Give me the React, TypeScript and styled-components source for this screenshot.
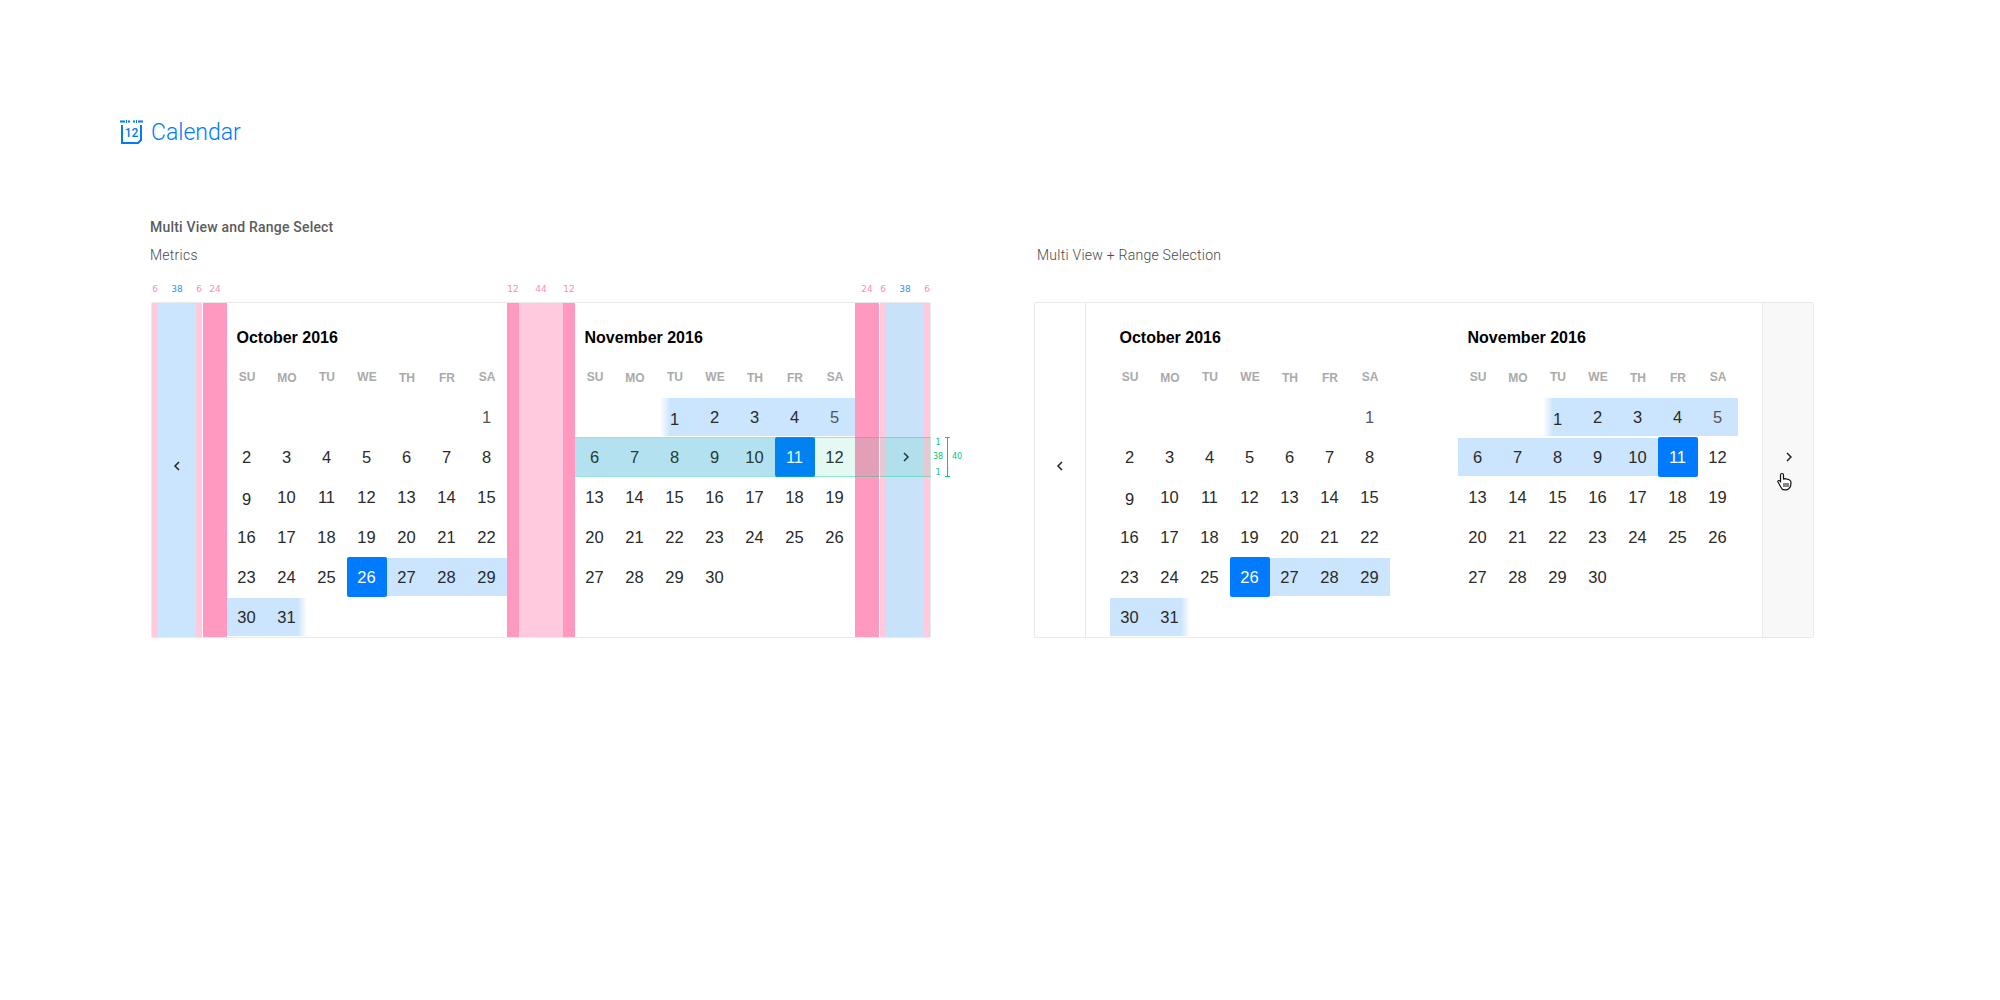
import React from 'react';
import styled, { createGlobalStyle, css } from 'styled-components';

const GlobalStyle = createGlobalStyle`
  html, body {
    margin: 0;
    background: #fff;
  }
`;

const Page = styled.div`
  width: 2000px;
  height: 1000px;
  padding: 118px 0 0 120px;
  box-sizing: border-box;
  font-family: Roboto, 'Liberation Sans', sans-serif;
  overflow: hidden;
`;

const Header = styled.header`
  display: flex;
  align-items: center;
  gap: 8px;
  height: 28px;
  color: #007aff;
`;

const HeaderTitle = styled.h1`
  margin: 2px 0 0;
  font-size: 23px;
  font-weight: 300;
  line-height: 28px;
`;

const Section = styled.section`
  display: grid;
  grid-template-columns: 780px 780px;
  column-gap: 103px;
  margin: 71px 0 0 31px;
`;

const SectionTitle = styled.h2`
  grid-column: 1 / -1;
  margin: 0 0 8px -1px;
  font-size: 14px;
  font-weight: 500;
  line-height: 20px;
  letter-spacing: 0.2px;
  color: #5c5c5c;
`;

const Caption = styled.div<{ $indent?: number }>`
  margin-left: ${(p) => p.$indent ?? -1}px;
  font-size: 14px;
  font-weight: 300;
  line-height: 20px;
  letter-spacing: 0.25px;
  color: #4a4a4a;
`;

const Metrics = styled.div`
  display: flex;
  height: 12px;
  margin: 18px 0 7px;
  padding-left: 1px;
`;

const Metric = styled.span<{ $w: number; $blue?: boolean }>`
  flex: 0 0 ${(p) => p.$w}px;
  text-align: center;
  font-family: 'DejaVu Sans', sans-serif;
  font-size: 9px;
  line-height: 12px;
  color: ${(p) => (p.$blue ? '#2a93ff' : '#ff8ab5')};
`;

const Frame = styled.div`
  position: relative;
  display: flex;
  height: 336px;
  box-sizing: border-box;
  border: 1px solid #e9e9e9;
  border-radius: 2px;
`;

const Strip = styled.div<{ $w: number; $bg: string }>`
  flex: 0 0 ${(p) => p.$w}px;
  background: ${(p) => p.$bg};
`;

const Rule = styled.div<{ $white?: boolean }>`
  flex: 0 0 1px;
  background: ${(p) => (p.$white ? '#fff' : '#e9e9e9')};
`;

const NavButton = styled.div<{ $w: number; $bg?: string; $lift: number }>`
  flex: 0 0 ${(p) => p.$w}px;
  display: flex;
  align-items: center;
  justify-content: center;
  padding-bottom: ${(p) => p.$lift}px;
  box-sizing: border-box;
  background: ${(p) => p.$bg ?? 'transparent'};
  color: #222;
`;

const Month = styled.div`
  flex: 0 0 280px;
`;

const MonthTitle = styled.h3`
  margin: 0;
  height: 54px;
  padding: 24px 0 0 9.5px;
  box-sizing: border-box;
  font-family: 'Liberation Sans', Arial, sans-serif;
  font-size: 16px;
  font-weight: 700;
  line-height: 22px;
  color: #000;
`;

const WeekRow = styled.div`
  display: grid;
  grid-template-columns: repeat(7, 40px);
  height: 40px;
`;

const WeekDay = styled.div<{ $low?: boolean }>`
  display: flex;
  align-items: center;
  justify-content: center;
  padding-top: ${(p) => (p.$low ? 2 : 0)}px;
  box-sizing: border-box;
  font-family: 'Liberation Sans', Arial, sans-serif;
  font-size: 12px;
  font-weight: 700;
  color: #aaa;
`;

type Tone = 'none' | 'band' | 'fadeIn' | 'fadeOut' | 'selected';

const toneStyles = {
  none: css``,
  band: css`
    margin: 1px 0;
    background: #cbe5fe;
  `,
  fadeIn: css`
    margin: 1px 0;
    background: linear-gradient(to right, #fff 5px, #cbe5fe 15px);
  `,
  fadeOut: css`
    margin: 1px 0;
    background: linear-gradient(to right, #cbe5fe 31px, #fff 40px);
  `,
  selected: css`
    background: #007aff;
    border-radius: 2px;
    color: #fff;
  `,
};

const Day = styled.div<{ $tone: Tone; $dim?: boolean; $dy: number }>`
  display: flex;
  align-items: center;
  justify-content: center;
  padding: ${(p) => p.$dy}px 1px 0 0;
  box-sizing: border-box;
  font-family: 'Liberation Sans', Arial, sans-serif;
  font-size: 16.5px;
  color: ${(p) => (p.$dim ? '#555' : '#2a2a2a')};
  ${(p) => toneStyles[p.$tone]}
`;

const RowGuide = styled.div`
  position: absolute;
  top: 134px;
  left: 423px;
  right: -1px;
  height: 40px;
  box-sizing: border-box;
  border-top: 1px solid rgba(0, 200, 140, 0.35);
  border-bottom: 1px solid rgba(0, 200, 140, 0.35);
  background: rgba(0, 200, 130, 0.11);
  pointer-events: none;
`;

const Bracket = styled.div`
  position: absolute;
  top: 134px;
  left: 793px;
  width: 5px;
  height: 40px;
  box-sizing: border-box;
  border: 1px solid #00c98a;
  border-left: none;
  border-right: none;
  &::after {
    content: '';
    display: block;
    width: 1px;
    height: 100%;
    margin-left: 2px;
    background: #00c98a;
  }
`;

const GuideLabel = styled.span<{ $top: number; $left: number }>`
  position: absolute;
  top: ${(p) => p.$top}px;
  left: ${(p) => p.$left}px;
  transform: translateX(-50%);
  font-family: 'DejaVu Sans', sans-serif;
  font-size: 8px;
  line-height: 10px;
  color: #00c98a;
`;

const Cursor = styled.svg`
  position: absolute;
  top: 169px;
  left: 742px;
`;

const Chevron: React.FC<{ dir: 'left' | 'right' }> = ({ dir }) => (
  <svg width="8" height="10" viewBox="0 0 8 10" fill="none">
    <path
      d={dir === 'left' ? 'M6 1 2 5l4 4' : 'M3 1l4 4-4 4'}
      stroke="currentColor"
      strokeWidth="1.5"
    />
  </svg>
);

const CalendarIcon = () => (
  <svg width="23" height="24" viewBox="0 0 23 24" fill="none">
    <path d="M0 1.500h5M8 1.500h2M13 1.500h2M18 1.500h5" stroke="#007aff" strokeWidth="2" />
    <path d="M6.500 0v3M16.500 0v3" stroke="#007aff" strokeWidth="1" />
    <path d="M2 5v18h16l3-3V5" stroke="#007aff" strokeWidth="2" />
    <text
      x="11.500"
      y="17"
      textAnchor="middle"
      fontFamily="Roboto, sans-serif"
      fontSize="12"
      fontWeight="500"
      fill="#007aff"
    >
      12
    </text>
  </svg>
);

const WEEK = ['SU', 'MO', 'TU', 'WE', 'TH', 'FR', 'SA'];
const LOW_WEEK = ['MO', 'TH', 'FR'];

type MonthProps = {
  title: string;
  offset: number;
  length: number;
  tone: (day: number) => Tone;
  dim: number;
  low: number;
};

const MonthView: React.FC<MonthProps> = ({ title, offset, length, tone, dim, low }) => {
  const cells = Array.from({ length: 42 }, (_, i) => {
    const day = i - offset + 1;
    return day >= 1 && day <= length ? day : 0;
  });
  return (
    <Month>
      <MonthTitle>{title}</MonthTitle>
      <WeekRow>
        {WEEK.map((d) => (
          <WeekDay key={d} $low={LOW_WEEK.includes(d)}>
            {d}
          </WeekDay>
        ))}
      </WeekRow>
      {[0, 1, 2, 3, 4, 5].map((row) => (
        <WeekRow key={row}>
          {cells.slice(row * 7, row * 7 + 7).map((day, i) => (
            <Day
              key={i}
              $tone={day ? tone(day) : 'none'}
              $dim={day === dim}
              $dy={day === low ? 4 : 0}
            >
              {day || ''}
            </Day>
          ))}
        </WeekRow>
      ))}
    </Month>
  );
};

const octoberTone = (day: number): Tone => {
  if (day === 26) return 'selected';
  if (day === 31) return 'fadeOut';
  return day > 26 ? 'band' : 'none';
};

const novemberTone = (day: number): Tone => {
  if (day === 11) return 'selected';
  if (day === 1) return 'fadeIn';
  return day < 11 ? 'band' : 'none';
};

const October = () => (
  <MonthView title="October 2016" offset={6} length={31} tone={octoberTone} dim={1} low={9} />
);
const November = () => (
  <MonthView title="November 2016" offset={2} length={30} tone={novemberTone} dim={5} low={1} />
);

const METRICS: Array<[number, string, boolean?]> = [
  [6, '6'],
  [38, '38', true],
  [6, '6'],
  [1, ''],
  [24, '24'],
  [280, ''],
  [12, '12'],
  [44, '44'],
  [12, '12'],
  [280, ''],
  [24, '24'],
  [1, ''],
  [6, '6'],
  [38, '38', true],
  [6, '6'],
];

const PINK = '#ff99bf';
const LIGHT = '#ffc9de';
const BLUE = '#cbe5fe';

const App: React.FC = () => (
  <Page>
    <GlobalStyle />
    <Header>
      <CalendarIcon />
      <HeaderTitle>Calendar</HeaderTitle>
    </Header>
    <Section>
      <SectionTitle>Multi View and Range Select</SectionTitle>
      <div>
        <Caption>Metrics</Caption>
        <Metrics>
          {METRICS.map(([w, label, blue], i) => (
            <Metric key={i} $w={w} $blue={blue}>
              {label}
            </Metric>
          ))}
        </Metrics>
        <Frame>
          <Strip $w={6} $bg={LIGHT} />
          <NavButton $w={38} $bg={BLUE} $lift={8}>
            <Chevron dir="left" />
          </NavButton>
          <Strip $w={6} $bg={LIGHT} />
          <Rule $white />
          <Strip $w={24} $bg={PINK} />
          <October />
          <Strip $w={12} $bg={PINK} />
          <Strip $w={44} $bg={LIGHT} />
          <Strip $w={12} $bg={PINK} />
          <November />
          <Strip $w={24} $bg={PINK} />
          <Rule $white />
          <Strip $w={6} $bg={LIGHT} />
          <NavButton $w={38} $bg="#c7e2f9" $lift={26}>
            <Chevron dir="right" />
          </NavButton>
          <Strip $w={6} $bg={LIGHT} />
          <RowGuide />
          <Bracket />
          <GuideLabel $top={135} $left={786}>1</GuideLabel>
          <GuideLabel $top={149} $left={786}>38</GuideLabel>
          <GuideLabel $top={165} $left={786}>1</GuideLabel>
          <GuideLabel $top={149} $left={805}>40</GuideLabel>
        </Frame>
      </div>
      <div>
        <Caption $indent={3}>Multi View + Range Selection</Caption>
        <Metrics />
        <Frame>
          <NavButton $w={50} $lift={8}>
            <Chevron dir="left" />
          </NavButton>
          <Rule />
          <Strip $w={24} $bg="transparent" />
          <October />
          <Strip $w={68} $bg="transparent" />
          <November />
          <Strip $w={24} $bg="transparent" />
          <Rule />
          <NavButton $w={50} $bg="#f8f8f8" $lift={26}>
            <Chevron dir="right" />
          </NavButton>
          <Cursor width="16" height="19" viewBox="0 0 16 19">
            <path
              d="M5 1.500c1 0 1.500.6 1.500 1.500v4l1.500-.3 1.500.3 1.500.3 1.500.7c1 .5 1.500 1.200 1.500 2.300 0 3-1 7-4.500 7.500-2 .3-4 0-5-1.500L1 10c-.5-.8 0-1.500.8-1.500.6 0 1.200.4 1.700 1V3c0-1 .5-1.500 1.500-1.500z"
              fill="#fff"
              stroke="#111"
              strokeWidth="1.200"
            />
            <path d="M7 11v4M9 11v4M11 11v4" stroke="#111" strokeWidth="1" />
          </Cursor>
        </Frame>
      </div>
    </Section>
  </Page>
);

export default App;
